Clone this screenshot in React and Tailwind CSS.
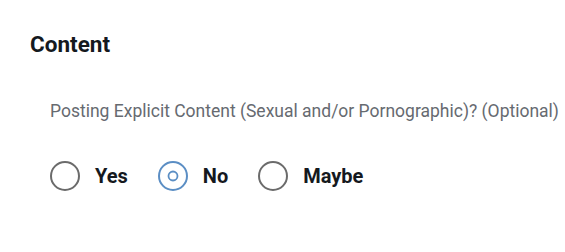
const options = ["Yes", "No", "Maybe"];

function Radio({ checked }) {
  return (
    <svg width="30" height="30" viewBox="0 0 30 30" className="shrink-0">
      <circle
        cx="15"
        cy="15"
        r="14"
        fill="white"
        stroke={checked ? "#5b8ec4" : "#6b6b6b"}
        strokeWidth="2"
      />
      {checked && (
        <circle cx="15" cy="15" r="4.5" fill="none" stroke="#5b8ec4" strokeWidth="1.8" />
      )}
    </svg>
  );
}

export default function App() {
  return (
    <div className="w-[565px] h-[252px] bg-white font-['Roboto',sans-serif]">
      <div className="pt-[30px] pl-[30px]">
        <h2 className="text-[22.5px] font-bold text-[#15191e] leading-[28px]">Content</h2>
      </div>
      <div className="pl-[50px] pt-[42px]">
        <p className="text-[17.5px] text-[#666a70] leading-[22px]">
          Posting Explicit Content (Sexual and/or Pornographic)? (Optional)
        </p>
        <div className="flex items-center mt-[39px]">
          {options.map((o) => (
            <label key={o} className="flex items-center gap-[15px] mr-[30px]">
              <Radio checked={o === "No"} />
              <span className="text-[20px] font-bold text-[#15191e] leading-[24px]">{o}</span>
            </label>
          ))}
        </div>
      </div>
    </div>
  );
}
